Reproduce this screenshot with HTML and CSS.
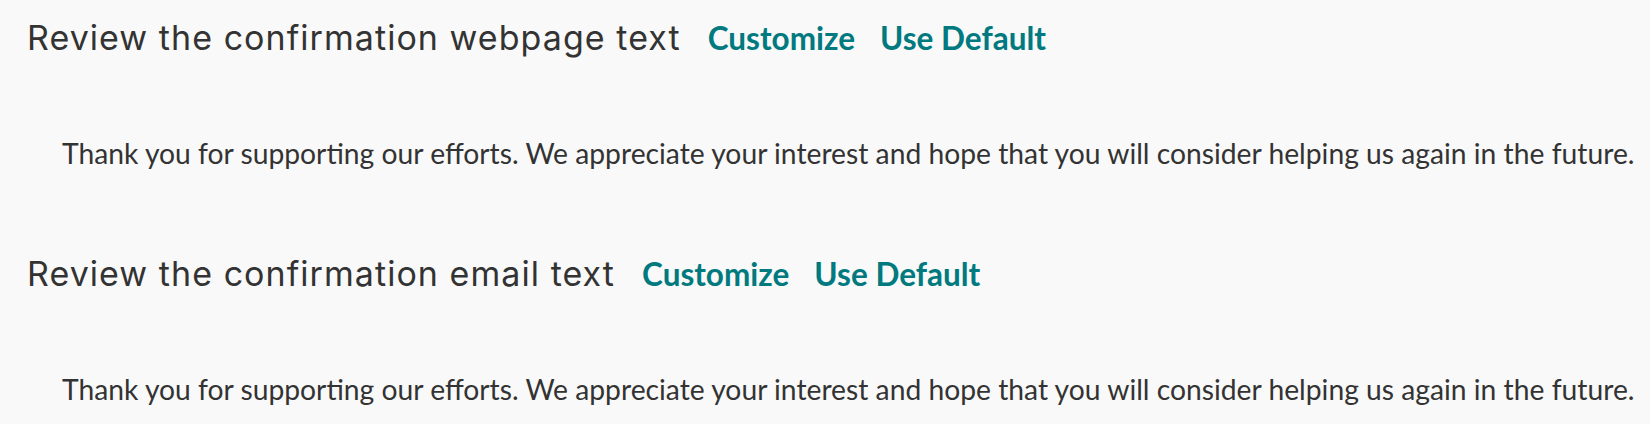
FILE: index.html
```html
<!DOCTYPE html>
<html lang="en">
<head>
<meta charset="utf-8">
<title>Confirmation text</title>
<link rel="stylesheet" href="styles.css">
</head>
<body>
<main class="page">
  <section class="block">
    <div class="block-head">
      <h2 class="block-title">Review the confirmation webpage text</h2>
      <a class="action" href="#">Customize</a>
      <a class="action" href="#">Use Default</a>
    </div>
    <p class="block-text">Thank you for supporting our efforts. We appreciate your interest and hope that you will consider helping us again in the future.</p>
  </section>
  <section class="block">
    <div class="block-head">
      <h2 class="block-title">Review the confirmation email text</h2>
      <a class="action" href="#">Customize</a>
      <a class="action" href="#">Use Default</a>
    </div>
    <p class="block-text">Thank you for supporting our efforts. We appreciate your interest and hope that you will consider helping us again in the future.</p>
  </section>
</main>
</body>
</html>
```
FILE: styles.css
```css
html, body {
  margin: 0;
  background: #f9f9f9;
}
.page {
  padding: 18px 0 0 27px;
  display: flex;
  flex-direction: column;
  gap: 81px;
  color: #333333;
}
.block-head {
  display: flex;
  align-items: baseline;
  gap: 25px;
  height: 40px;
}
.block-title {
  margin: 0 2px 0 0;
  font-family: Inter, sans-serif;
  font-weight: 400;
  font-size: 34px;
  letter-spacing: 1.05px;
  line-height: 40px;
  white-space: nowrap;
}
.action {
  font-family: Lato, sans-serif;
  font-weight: 700;
  font-size: 31.5px;
  line-height: 40px;
  color: #007a7f;
  text-decoration: none;
  white-space: nowrap;
}
.block-text {
  margin: 75px 0 0 35px;
  font-family: Lato, sans-serif;
  font-size: 28.25px;
  line-height: 40px;
  white-space: nowrap;
}
```
